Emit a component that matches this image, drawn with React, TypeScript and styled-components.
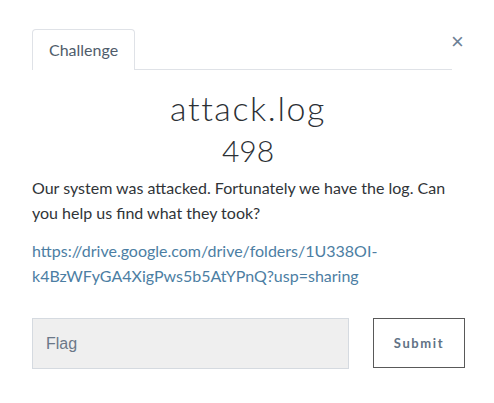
import React from 'react'
import styled, { createGlobalStyle } from 'styled-components'

const GlobalStyle = createGlobalStyle`
  html, body {
    margin: 0;
    padding: 0;
    background: #ffffff;
  }
  body {
    font-family: Lato, 'Liberation Sans', sans-serif;
    color: #303438;
  }
`

const App = () => {
  return (
    <>
      <GlobalStyle />
      <Modal>
        <CloseButton aria-label="Close">×</CloseButton>
        <Tabs>
          <Tab>Challenge</Tab>
          <TabLine />
        </Tabs>
        <Title>attack.log</Title>
        <Value>498</Value>
        <Description>
          Our system was attacked. Fortunately we have the log. Can you help us find what they took?
        </Description>
        <Description>
          <Link href="#">https://drive.google.com/drive/folders/1U338OI-k4BzWFyGA4XigPws5b5AtYPnQ?usp=sharing</Link>
        </Description>
        <SubmitRow>
          <FlagInput placeholder="Flag" />
          <SubmitButton>Submit</SubmitButton>
        </SubmitRow>
      </Modal>
    </>
  )
}

export default App

const Modal = styled.div`
  position: relative;
  width: 494px;
  height: 403px;
  box-sizing: border-box;
  padding: 29px 42px 0 32px;
`

const CloseButton = styled.div`
  position: absolute;
  top: 31px;
  left: 451px;
  font-family: 'Liberation Sans', sans-serif;
  font-size: 22px;
  line-height: 22px;
  color: #6d8096;
`

const Tabs = styled.div`
  display: flex;
  align-items: flex-end;
`

const Tab = styled.div`
  font-size: 16px;
  line-height: 24px;
  padding: 8px 16px;
  color: #4f5c6b;
  border: 1px solid #dfe2e7;
  border-bottom: none;
  border-radius: 4px 4px 0 0;
`

const TabLine = styled.div`
  flex: 1;
  border-bottom: 1px solid #dfe2e7;
`

const Title = styled.h2`
  margin: 18px -12px 0 0;
  text-align: center;
  font-family: Lato, sans-serif;
  font-weight: 300;
  font-size: 34px;
  letter-spacing: 1.6px;
  line-height: 40px;
  color: #2c3035;
`

const Value = styled.h3`
  margin: 4px -12px 0 0;
  text-align: center;
  font-family: Lato, sans-serif;
  font-weight: 300;
  font-size: 30px;
  line-height: 36px;
  color: #2c3035;
`

const Description = styled.p`
  margin: 7px 0 13px;
  font-size: 16px;
  line-height: 25px;
  color: #303438;

  & + & {
    margin-top: 0;
  }
`

const Link = styled.a`
  color: #4c7ea3;
  text-decoration: none;
`

const SubmitRow = styled.div`
  display: flex;
  align-items: flex-start;
  gap: 24px;
  margin-top: 30px;
  width: 433px;
`

const FlagInput = styled.input`
  width: 317px;
  height: 51px;
  box-sizing: border-box;
  padding: 0 13px;
  background: #efefef;
  border: 1px solid #d5dae0;
  font-family: Arial, 'Liberation Sans', sans-serif;
  font-size: 16px;
  color: #333;
  outline: none;

  &::placeholder {
    color: #6b7888;
  }
`

const SubmitButton = styled.button`
  width: 92px;
  height: 50px;
  box-sizing: border-box;
  background: #ffffff;
  border: 1px solid #595959;
  font-family: Lato, sans-serif;
  font-weight: 700;
  font-size: 13px;
  letter-spacing: 1.6px;
  color: #617285;
`
